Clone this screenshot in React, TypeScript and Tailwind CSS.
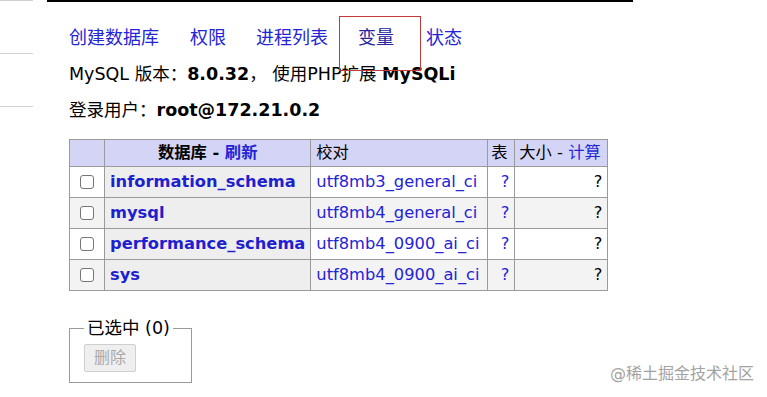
import React from "react";

const rows = [
  { name: "information_schema", coll: "utf8mb3_general_ci" },
  { name: "mysql", coll: "utf8mb4_general_ci" },
  { name: "performance_schema", coll: "utf8mb4_0900_ai_ci" },
  { name: "sys", coll: "utf8mb4_0900_ai_ci" },
];

const tabs = [
  { label: "创建数据库", gap: "mr-[31px]" },
  { label: "权限", gap: "mr-[30px]" },
  { label: "进程列表", gap: "mr-[30px]" },
  { label: "变量", gap: "mr-[32px]" },
  { label: "状态", gap: "" },
];

function Checkbox() {
  return <div className="mx-auto h-[14px] w-[14px] rounded-[3px] border border-[#767676] bg-white" />;
}

export default function App() {
  return (
    <div
      className="relative h-[397px] w-[767px] overflow-hidden bg-white text-black"
      style={{ fontFamily: '"DejaVu Sans", "Noto Sans CJK SC", sans-serif' }}
    >
      <div className="flex">
        {/* left nav remains */}
        <div className="w-[33px] shrink-0">
          <div className="h-[54px] border-t border-b border-[#d0d0d0]" />
          <div className="h-[53px] border-b border-[#d0d0d0]" />
        </div>

        <div className="ml-[14px] w-[586px] border-t-2 border-black pl-[22px]">
          {/* tabs */}
          <div className="mt-[24px] flex text-[18px] leading-[24px]">
            {tabs.map((t) => (
              <div key={t.label} className={"relative " + t.gap}>
                <span className={t.label === "变量" ? "text-[#24249e]" : "text-[#2424d6]"}>{t.label}</span>
                {t.label === "变量" && (
                  <div className="absolute left-[-19px] top-[-10px] h-[55px] w-[82px] border border-[#c23a3a]" />
                )}
              </div>
            ))}
          </div>

          {/* server info */}
          <div className="mt-[12px] text-[17.5px] leading-[24px]">
            MySQL 版本：<b>8.0.32</b>， 使用PHP扩展 <b>MySQLi</b>
          </div>
          <div className="mt-[12px] text-[17.5px] leading-[24px]">
            登录用户：<b>root@172.21.0.2</b>
          </div>

          {/* databases table */}
          <table className="mt-[17px] border-collapse text-[16.3px] leading-[20px]">
            <thead>
              <tr className="h-[27px] bg-[#d4d4f6]">
                <th className="w-[35px] border border-[#9a9a9a]" />
                <th className="w-[206px] border border-[#9a9a9a] px-[5px] text-center font-bold">
                  数据库 - <a className="text-[#2424d6]">刷新</a>
                </th>
                <th className="w-[177px] border border-[#9a9a9a] px-[5px] text-left font-normal">校对</th>
                <th className="w-[27px] border border-[#9a9a9a] px-[3px] text-left font-normal">表</th>
                <th className="w-[93px] border border-[#9a9a9a] px-[4px] text-left font-normal">
                  大小 - <a className="text-[#2424d6]">计算</a>
                </th>
              </tr>
            </thead>
            <tbody>
              {rows.map((r, i) => (
                <tr key={r.name} className={"h-[31px] " + (i % 2 === 1 ? "bg-[#f3f3f3]" : "bg-white")}>
                  <td className="border border-[#9a9a9a]">
                    <Checkbox />
                  </td>
                  <td className="border border-[#9a9a9a] bg-[#eeeeee] px-[5px] font-bold text-[#1f1fcf]">
                    {r.name}
                  </td>
                  <td className="border border-[#9a9a9a] px-[5px] text-[#2424d6]">{r.coll}</td>
                  <td className="border border-[#9a9a9a] px-[5px] text-right text-[#2424d6]">?</td>
                  <td className="border border-[#9a9a9a] px-[5px] text-right">?</td>
                </tr>
              ))}
            </tbody>
          </table>

          {/* selection */}
          <fieldset className="mt-[26px] w-[123px] border border-[#9a9a9a] px-[14px] pb-[10px] pt-[5px]">
            <legend className="px-[3px] text-[17.5px] leading-[22px]">已选中 (0)</legend>
            <button
              disabled
              className="h-[28px] w-[52px] rounded-[2px] border border-[#cfcfcf] bg-[#efefef] text-[16px] text-[#a9a9a9]"
            >
              删除
            </button>
          </fieldset>
        </div>
      </div>

      <div className="absolute left-[610px] top-[364px] text-[16px] leading-[20px] text-[#a3a3a3]">
        @稀土掘金技术社区
      </div>
    </div>
  );
}
